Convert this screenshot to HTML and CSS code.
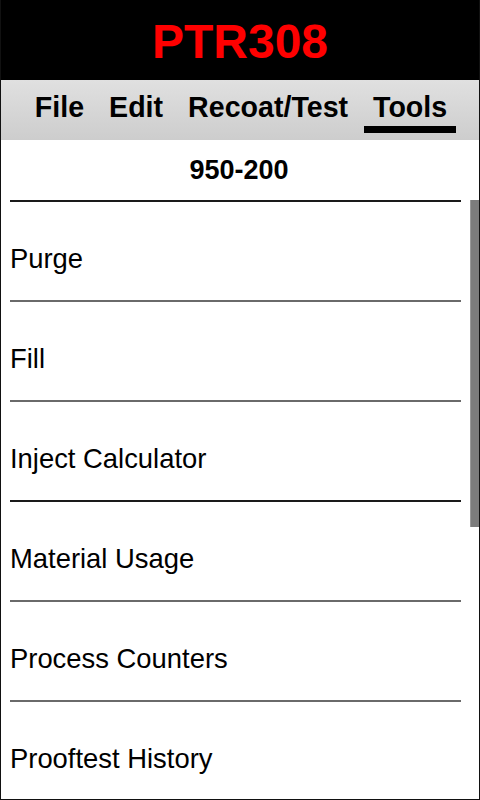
FILE: index.html
```html
<!DOCTYPE html>
<html>
<head>
<meta charset="utf-8">
<link rel="stylesheet" href="styles.css">
</head>
<body>
<div class="app">
  <header class="title-bar">PTR308</header>
  <nav class="tabs">
    <span class="tab">File</span>
    <span class="tab">Edit</span>
    <span class="tab">Recoat/Test</span>
    <span class="tab active">Tools</span>
  </nav>
  <main class="content">
    <div class="list-head">950-200</div>
    <ul class="list">
      <li class="item dark">Purge</li>
      <li class="item">Fill</li>
      <li class="item">Inject Calculator</li>
      <li class="item dark">Material Usage</li>
      <li class="item">Process Counters</li>
      <li class="item">Prooftest History</li>
    </ul>
    <div class="scroll-thumb"></div>
  </main>
</div>
</body>
</html>
```
FILE: styles.css
```css
* { box-sizing: border-box; }
html, body { margin: 0; padding: 0; background: #fff; }
body { font-family: "Liberation Sans", Arial, sans-serif; }
.app {
  width: 480px;
  height: 800px;
  border: 1px solid #111;
  border-top: none;
  overflow: hidden;
  display: flex;
  flex-direction: column;
}
.title-bar {
  height: 80px;
  margin: 0 -1px;
  background: #000;
  color: #ff0000;
  font-weight: bold;
  font-size: 48px;
  display: flex;
  align-items: center;
  justify-content: center;
  padding-top: 2px;
}
.tabs {
  height: 60px;
  background: linear-gradient(#e0e0e0, #cdcdcd);
  display: flex;
  justify-content: center;
  gap: 7px;
  padding-left: 2px;
}
.tab {
  font-size: 28.6px;
  font-weight: bold;
  color: #000;
  padding: 11px 9px 0;
  line-height: 32px;
  height: 53px;
  border-bottom: 7px solid transparent;
}
.tab.active { border-bottom-color: #000; }
.content {
  position: relative;
  flex: 1;
  overflow: hidden;
}
.list-head {
  text-align: center;
  font-weight: bold;
  font-size: 27px;
  line-height: 30px;
  padding: 15px 0 15px;
  margin: 0 11px 0 9px;
}
.list {
  list-style: none;
  margin: 0 18px 0 9px;
  padding: 0;
}
.item {
  border-top: 2px solid #6a6a6a;
  font-size: 27.4px;
  line-height: 30px;
  padding: 42px 0 26px 0;
  color: #000;
}
.item.dark { border-top-color: #1a1a1a; }
.scroll-thumb {
  position: absolute;
  top: 60px;
  right: 0;
  width: 9px;
  height: 327px;
  background: #7c7c7c;
  border-left: 1px solid #999;
}
```
